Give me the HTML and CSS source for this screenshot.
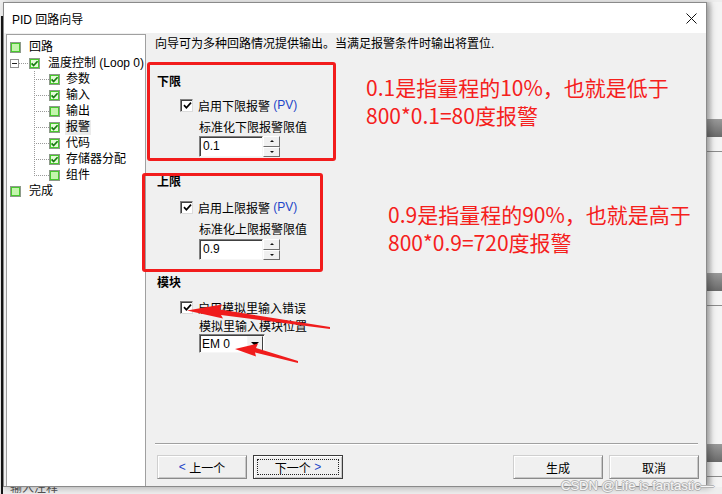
FILE: index.html
```html
<!DOCTYPE html>
<html lang="zh-CN">
<head>
	<meta charset="UTF-8">
	<title>PID 回路向导</title>
	<link rel="stylesheet" href="styles.css">
</head>
<body>
	<svg class="defs" width="0" height="0">
		<symbol id="leaf" viewBox="0 0 11 11">
			<rect x="0.5" y="0.5" width="10" height="10" fill="#48c82e" stroke="#8d9a8a"/>
			<rect x="2" y="2" width="7" height="7" fill="#c4f5ad"/>
		</symbol>
		<symbol id="leafok" viewBox="0 0 11 11">
			<rect x="0.5" y="0.5" width="10" height="10" fill="#48c82e" stroke="#8d9a8a"/>
			<rect x="2" y="2" width="7" height="7" fill="#e4fbd8"/>
			<path d="M2.6 5.4 L4.6 7.6 L8.6 3.2" fill="none" stroke="#187a12" stroke-width="1.7"/>
		</symbol>
		<symbol id="tick" viewBox="0 0 9 9">
			<path d="M1 4.2 L3.4 6.8 L8 1.6" fill="none" stroke="#000" stroke-width="1.7"/>
		</symbol>
	</svg>

	<div class="desk">
		<div class="row">
			<div class="dialog">
				<div class="titlebar">
					<span>PID 回路向导</span>
					<svg class="close" width="11" height="11" viewBox="0 0 11 11"><path d="M0.5 0.5 L10.5 10.5 M10.5 0.5 L0.5 10.5" stroke="#111" stroke-width="1"/></svg>
				</div>
				<div class="body">
					<div class="tree">
						<div class="node"><svg class="ico"><use href="#leaf"/></svg><span class="txt">回路</span></div>
						<div class="node"><span class="exp"></span><span class="hconn"></span><svg class="ico"><use href="#leafok"/></svg><span class="txt">温度控制 (Loop 0)</span></div>
						<div class="node sub"><span class="conn"></span><svg class="ico"><use href="#leafok"/></svg><span class="txt">参数</span></div>
						<div class="node sub"><span class="conn"></span><svg class="ico"><use href="#leafok"/></svg><span class="txt">输入</span></div>
						<div class="node sub"><span class="conn"></span><svg class="ico"><use href="#leaf"/></svg><span class="txt">输出</span></div>
						<div class="node sub"><span class="conn"></span><svg class="ico"><use href="#leafok"/></svg><span class="txt sel">报警</span></div>
						<div class="node sub"><span class="conn"></span><svg class="ico"><use href="#leafok"/></svg><span class="txt">代码</span></div>
						<div class="node sub"><span class="conn"></span><svg class="ico"><use href="#leafok"/></svg><span class="txt">存储器分配</span></div>
						<div class="node sub"><span class="conn last"></span><svg class="ico"><use href="#leaf"/></svg><span class="txt">组件</span></div>
						<div class="node"><svg class="ico"><use href="#leaf"/></svg><span class="txt">完成</span></div>
					</div>

					<div class="pane">
						<p class="intro">向导可为多种回路情况提供输出。当满足报警条件时输出将置位.</p>

						<div class="head">下限</div>
						<div class="check"><span class="box"><svg><use href="#tick"/></svg></span>启用下限报警 <span class="pv">(PV)</span></div>
						<div class="flabel">标准化下限报警限值</div>
						<div class="spin"><span class="edit">0.1</span><span class="btns"><span class="sb up"></span><span class="sb dn"></span></span></div>

						<div class="head h2">上限</div>
						<div class="check c2"><span class="box"><svg><use href="#tick"/></svg></span>启用上限报警 <span class="pv">(PV)</span></div>
						<div class="flabel">标准化上限报警限值</div>
						<div class="spin s2"><span class="edit">0.9</span><span class="btns"><span class="sb up"></span><span class="sb dn"></span></span></div>

						<div class="head h3">模块</div>
						<div class="check c3"><span class="box"><svg><use href="#tick"/></svg></span>启用模拟里输入错误</div>
						<div class="flabel l3">模拟里输入模块位置</div>
						<div class="combo"><span class="edit">EM 0</span><span class="drop"></span></div>

						<div class="footer">
							<div class="sep"></div>
							<div class="buttons">
								<div class="group">
									<div class="btn"><span class="arr">&lt;</span> 上一个</div>
									<div class="btn def"><span class="focus">下一个 <span class="arr">&gt;</span></span></div>
								</div>
								<div class="group">
									<div class="btn">生成</div>
									<div class="btn">取消</div>
								</div>
							</div>
						</div>
					</div>
				</div>
			</div>
			<div class="side">
				<div class="bar b1"></div><div class="rule"></div>
				<div class="bar b2"></div><div class="rule"></div>
				<div class="bar b3"></div><div class="rule"></div>
			</div>
		</div>
		<div class="under">输入注释</div>

		<div class="mark mark-low"></div>
		<div class="mark mark-high"></div>
		<div class="note note-low">0.1是指量程的10%，也就是低于<br>800*0.1=80度报警</div>
		<div class="note note-high">0.9是指量程的90%，也就是高于<br>800*0.9=720度报警</div>
		<svg class="arrows" width="722" height="494" viewBox="0 0 722 494">
			<polygon points="187,310.5 222,304.5 220,309.5 330,327 330,329 221,315 223,318.5" fill="#f01c1c"/>
			<polygon points="235,349 258,343.5 256,348 298,361 298,363 255,352.5 256,356.5" fill="#f01c1c"/>
		</svg>
		<div class="watermark">CSDN @Life is fantastic—</div>
	</div>
</body>
</html>
```

FILE: styles.css
```css
body {
	margin: 0;
}
.defs {
	position: absolute;
}
.desk {
	position: relative;
	width: 722px;
	height: 494px;
	overflow: hidden;
	font: 12px "Liberation Sans", "Noto Sans CJK SC", sans-serif;
	color: #000;
	background: linear-gradient(to right, #e6e6e6 1px, #161616 1px, #161616 3px, transparent 3px) 0 16px / 3px 100% no-repeat, #eeeeee;
}
.row {
	display: flex;
	padding: 2px 0 0 3px;
}

/* dialog window */
.dialog {
	position: relative;
	z-index: 1;
	width: 704px;
	height: 485px;
	box-sizing: border-box;
	border: 1px solid #8a8a8a;
	background: #f0f0f0;
	display: flex;
	flex-direction: column;
	box-shadow: 3px 1px 7px rgba(0, 0, 0, 0.28);
}
.titlebar {
	flex: none;
	height: 30px;
	background: #fff;
	display: flex;
	align-items: center;
	justify-content: space-between;
	padding: 0 9px 0 8px;
}
.close {
	display: block;
}
.body {
	flex: 1;
	display: flex;
	min-height: 0;
}

/* tree */
.tree {
	flex: none;
	width: 140px;
	box-sizing: border-box;
	margin: 1px 0 0 2px;
	padding-top: 4px;
	border: 1px solid #a0a0a0;
	border-bottom: 0;
	background: #fff;
}
.node {
	display: flex;
	align-items: center;
	height: 16px;
	padding-left: 3px;
	white-space: nowrap;
}
.ico {
	flex: none;
	width: 11px;
	height: 11px;
}
.txt {
	margin-left: 7px;
	padding: 0 1px;
	line-height: 15px;
}
.txt.sel {
	background: #ebebeb;
}
.exp {
	flex: none;
	width: 9px;
	height: 9px;
	box-sizing: border-box;
	border: 1px solid #919191;
	background: linear-gradient(#222, #222) center / 5px 1px no-repeat, #fff;
}
.hconn {
	flex: none;
	width: 10px;
	height: 1px;
	background: repeating-linear-gradient(to right, #9a9a9a 0 1px, transparent 1px 2px);
}
.node.sub {
	padding-left: 27px;
}
.node.sub .txt {
	margin-left: 5px;
}
.conn {
	flex: none;
	width: 15px;
	height: 16px;
	background:
		repeating-linear-gradient(to bottom, #9a9a9a 0 1px, transparent 1px 2px) 0 0 / 1px 100% no-repeat,
		repeating-linear-gradient(to right, #9a9a9a 0 1px, transparent 1px 2px) 0 8px / 100% 1px no-repeat;
}
.conn.last {
	background:
		repeating-linear-gradient(to bottom, #9a9a9a 0 1px, transparent 1px 2px) 0 0 / 1px 9px no-repeat,
		repeating-linear-gradient(to right, #9a9a9a 0 1px, transparent 1px 2px) 0 8px / 100% 1px no-repeat;
}

/* right pane */
.pane {
	flex: 1;
	display: flex;
	flex-direction: column;
	padding: 0 7px 7px 0;
}
.intro {
	margin: 3px 0 0 9px;
	line-height: 16px;
	white-space: nowrap;
}
.head {
	margin: 22px 0 0 11px;
	line-height: 16px;
	font-weight: bold;
}
.head.h2 {
	margin-top: 17px;
}
.head.h3 {
	margin-top: 15px;
}
.check {
	display: flex;
	align-items: center;
	height: 16px;
	margin: 7px 0 0 34px;
	white-space: pre;
}
.check.c2 {
	margin-top: 9px;
}
.check.c3 {
	margin-top: 8px;
}
.box {
	flex: none;
	width: 13px;
	height: 13px;
	box-sizing: border-box;
	margin-right: 5px;
	border: 1px solid;
	border-color: #808080 #dcdcdc #dcdcdc #808080;
	box-shadow: inset 1px 1px 0 #404040;
	background: #fff;
	display: flex;
	align-items: center;
	justify-content: center;
}
.box svg {
	width: 9px;
	height: 9px;
	margin: 1px 0 0 1px;
}
.pv {
	color: #1e46c8;
}
.flabel {
	margin: 7px 0 0 53px;
	line-height: 16px;
}
.flabel.l3 {
	margin-top: 5px;
	line-height: 15px;
}
.spin {
	display: flex;
	width: 81px;
	height: 21px;
	margin-left: 53px;
}
.spin.s2 {
	margin-top: 1px;
}
.edit {
	flex: 1;
	box-sizing: border-box;
	border: 1px solid;
	border-color: #808080 #f6f6f6 #f6f6f6 #808080;
	box-shadow: inset 1px 1px 0 #404040;
	background: #fff;
	padding: 0 0 0 3px;
	line-height: 19px;
}
.btns {
	flex: none;
	width: 17px;
	display: flex;
	flex-direction: column;
	background: #fff;
}
.sb {
	flex: 1;
	box-sizing: border-box;
	border: 1px solid;
	border-color: #fff #6e6e6e #6e6e6e #fff;
	background: #f0f0f0;
	display: flex;
	align-items: center;
	justify-content: center;
}
.sb::before {
	content: "";
	border-left: 2px solid transparent;
	border-right: 2px solid transparent;
}
.sb.up::before {
	border-bottom: 2px solid #111;
}
.sb.dn::before {
	border-top: 2px solid #111;
}
.combo {
	display: flex;
	width: 66px;
	height: 19px;
	margin: -1px 0 0 53px;
	box-sizing: border-box;
	border: 1px solid;
	border-color: #808080 #f6f6f6 #f6f6f6 #808080;
	box-shadow: inset 1px 1px 0 #404040;
	background: #fff;
	padding: 1px 1px 1px 1px;
}
.combo .edit {
	border: 0;
	box-shadow: none;
	padding-left: 1px;
	line-height: 16px;
}
.drop {
	flex: none;
	width: 16px;
	box-sizing: border-box;
	border: 1px solid;
	border-color: #f4f4f4 #404040 #404040 #f4f4f4;
	background: #f0f0f0;
	display: flex;
	align-items: center;
	justify-content: center;
}
.drop::before {
	content: "";
	border-left: 4px solid transparent;
	border-right: 4px solid transparent;
	border-top: 4px solid #000;
}

/* footer */
.footer {
	margin-top: auto;
}
.sep {
	height: 1px;
	margin: 0 1px 0 9px;
	background: #a0a0a0;
	border-bottom: 1px solid #fff;
}
.buttons {
	display: flex;
	justify-content: space-between;
	margin: 10px 0 0 11px;
}
.group {
	display: flex;
	gap: 6px;
}
.btn {
	width: 90px;
	height: 24px;
	box-sizing: border-box;
	border: 1px solid;
	border-color: #cfcfcf #8a8a8a #8a8a8a #cfcfcf;
	box-shadow: inset 1px 1px 0 #fff, inset -1px -1px 0 #c8c8c8;
	background: #f0f0f0;
	display: flex;
	align-items: center;
	justify-content: center;
	white-space: pre;
}
.btn.def {
	border-color: #3c3c3c;
	padding: 3px;
}
.focus {
	flex: 1;
	align-self: stretch;
	display: flex;
	align-items: center;
	justify-content: center;
	border: 1px dotted #222;
}
.arr {
	color: #1e46c8;
}

/* backdrop window on the right */
.side {
	flex: 1;
	background: linear-gradient(to right, #d2d2d2, #f4f4f4 6px);
}
.bar {
	height: 18px;
	background: linear-gradient(#9a9a9a, #6a6a6a);
}
.b1 {
	margin-top: 117px;
}
.b2 {
	margin-top: 121px;
}
.b3 {
	margin-top: 138px;
}
.rule {
	height: 1px;
	margin-top: 14px;
	background: #8c8c8c;
}
.under {
	margin-top: -7px;
	padding-left: 10px;
	line-height: 16px;
	color: #555;
}

/* annotations */
.mark {
	position: absolute;
	z-index: 2;
	box-sizing: border-box;
	border: 3px solid #f21c1c;
	border-radius: 3px;
}
.mark-low {
	left: 147px;
	top: 62px;
	width: 189px;
	height: 99px;
}
.mark-high {
	left: 142px;
	top: 173px;
	width: 181px;
	height: 99px;
}
.note {
	position: absolute;
	z-index: 2;
	font: 21px/28px "Noto Sans CJK SC", "Noto Sans", sans-serif;
	color: #f5201c;
	white-space: nowrap;
}
.note-low {
	left: 366px;
	top: 73px;
}
.note-high {
	left: 388px;
	top: 200px;
}
.arrows {
	position: absolute;
	z-index: 2;
	left: 0;
	top: 0;
}
.watermark {
	position: absolute;
	z-index: 2;
	left: 561px;
	top: 478px;
	font: 13px/16px "Liberation Sans", sans-serif;
	color: #f6f6f6;
	text-shadow: 1px 0 0 #b4b4b4, -1px 0 0 #b4b4b4, 0 1px 0 #b4b4b4, 0 -1px 0 #b4b4b4;
}
```
